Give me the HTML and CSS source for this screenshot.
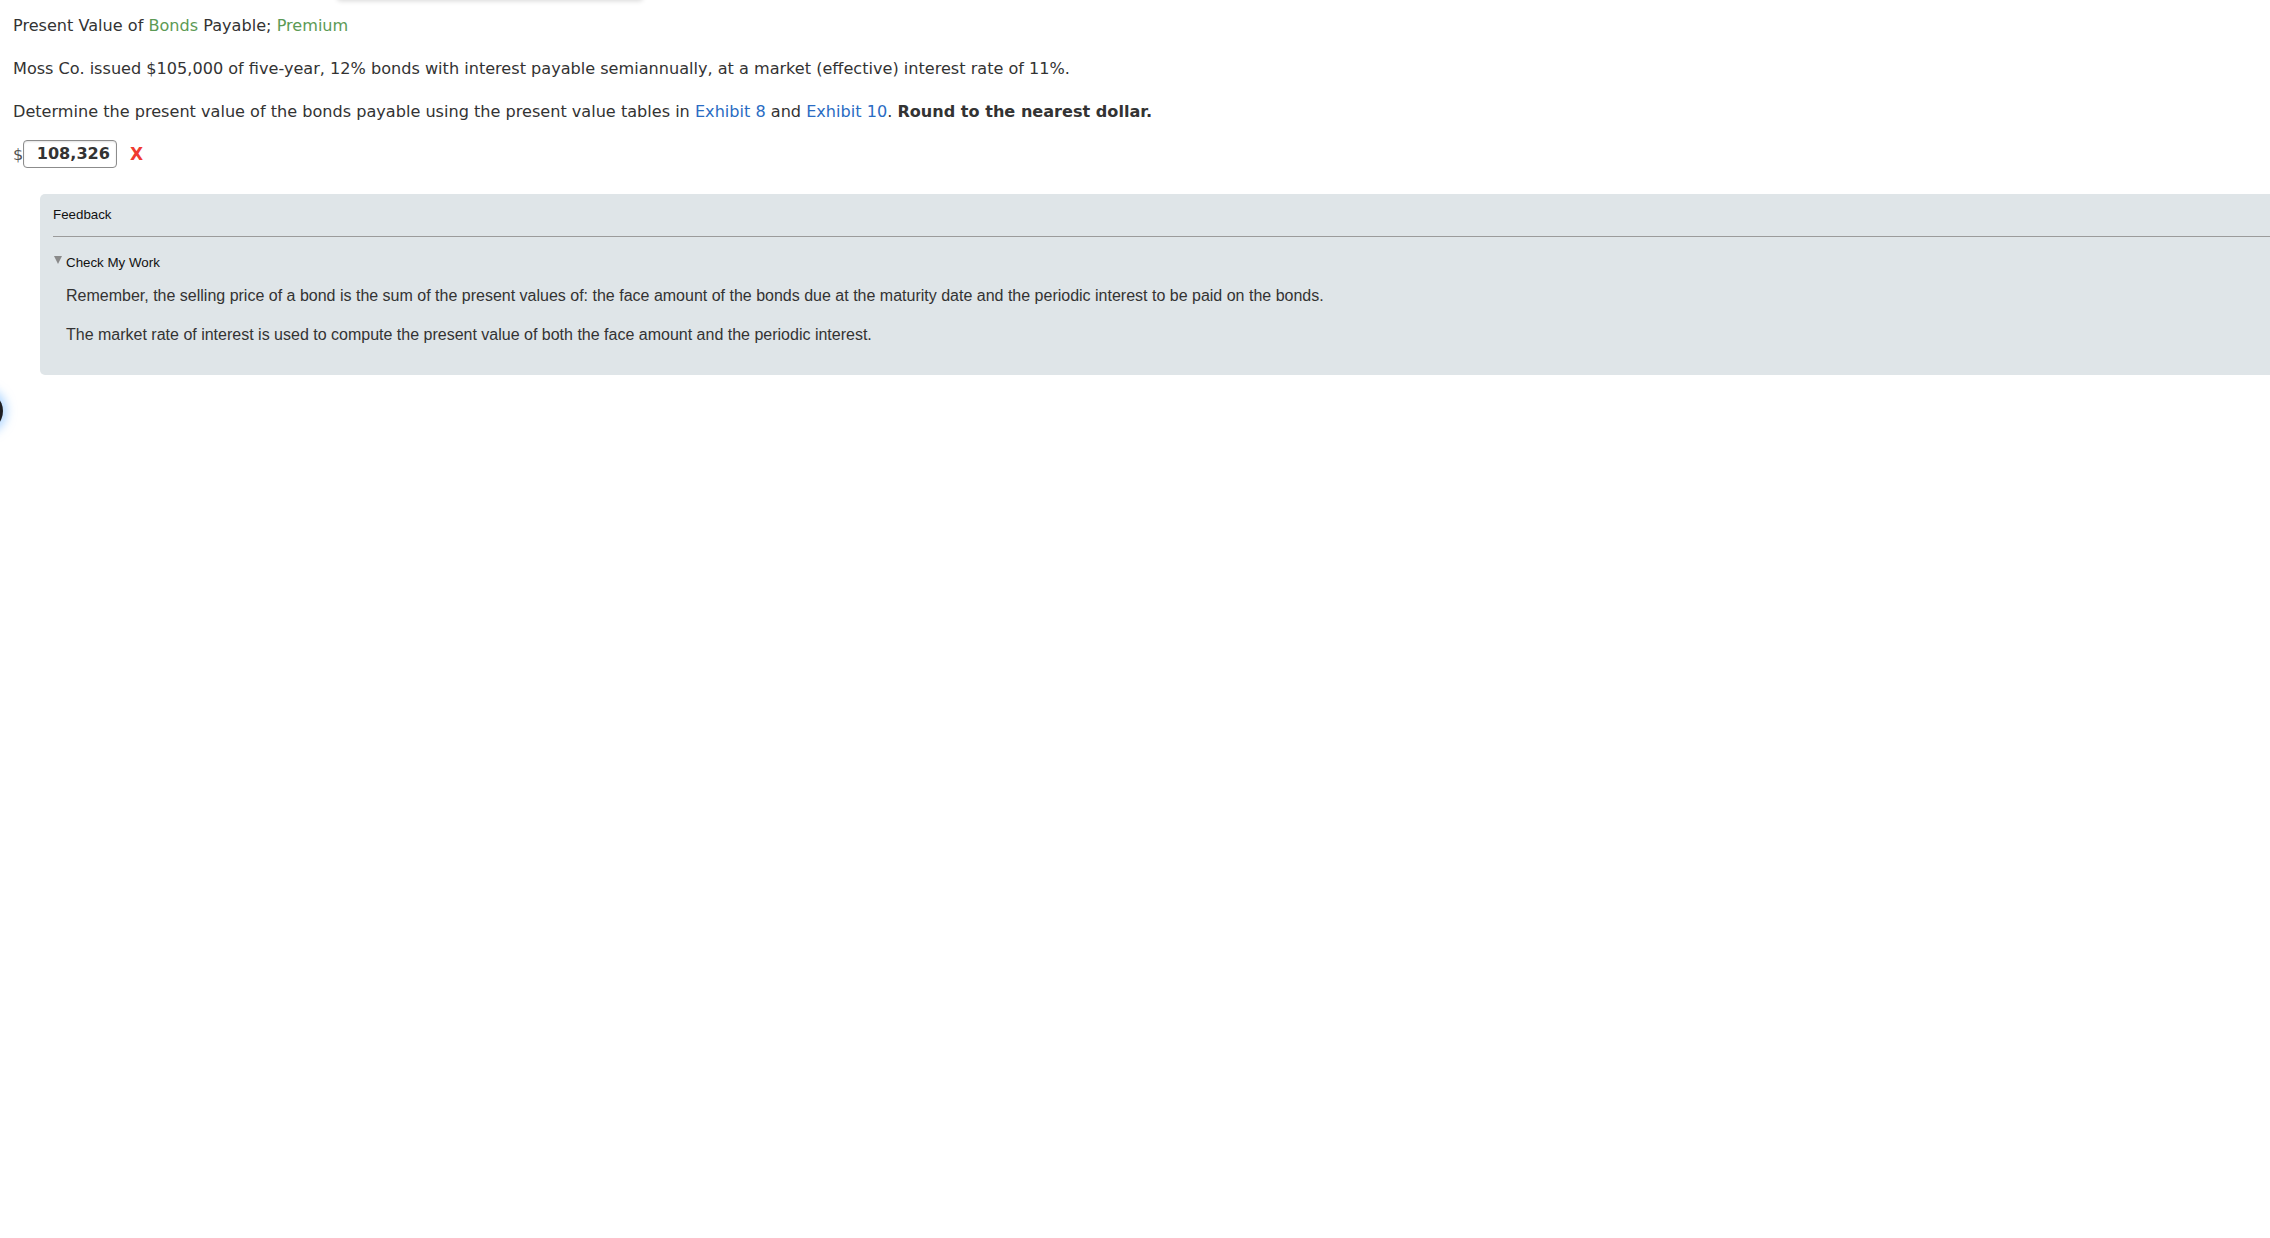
FILE: index.html
```html
<!DOCTYPE html>
<html lang="en">
<head>
<meta charset="utf-8">
<title>Present Value of Bonds Payable; Premium</title>
<link rel="stylesheet" href="styles.css">
</head>
<body>
<div class="top-shadow"></div>
<div class="side-dot"></div>
<main class="question">
  <p class="title">Present Value of <span class="term">Bonds</span> Payable; <span class="term">Premium</span></p>
  <p>Moss Co. issued $105,000 of five-year, 12% bonds with interest payable semiannually, at a market (effective) interest rate of 11%.</p>
  <p class="last">Determine the present value of the bonds payable using the present value tables in <a class="link" href="#">Exhibit 8</a> and <a class="link" href="#">Exhibit 10</a>. <strong>Round to the nearest dollar.</strong></p>
  <div class="answer-row">
    <span class="currency">$</span>
    <span class="answer-box">108,326</span>
    <span class="wrong">X</span>
  </div>
  <section class="feedback">
    <div class="feedback-head">Feedback</div>
    <div class="check-head"><span class="tri"></span>Check My Work</div>
    <div class="feedback-body">
      <p>Remember, the selling price of a bond is the sum of the present values of: the face amount of the bonds due at the maturity date and the periodic interest to be paid on the bonds.</p>
      <p>The market rate of interest is used to compute the present value of both the face amount and the periodic interest.</p>
    </div>
  </section>
</main>
</body>
</html>
```
FILE: styles.css
```css
html, body {
  margin: 0;
  padding: 0;
  background: #ffffff;
  overflow: hidden;
}
body {
  font-family: "DejaVu Sans", Verdana, sans-serif;
  font-size: 16.1px;
  color: #333333;
}
.top-shadow {
  position: absolute;
  top: -40px;
  left: 337px;
  width: 306px;
  height: 40px;
  background: #ffffff;
  border-radius: 4px;
  box-shadow: 0 1px 5px rgba(0, 0, 0, 0.16);
}
.side-dot {
  position: absolute;
  left: -37px;
  top: 391px;
  width: 40px;
  height: 40px;
  border-radius: 50%;
  background: #1e1e22;
  box-shadow: 0 0 10px 4px rgba(120, 185, 255, 0.55);
}
.question {
  padding: 16px 0 0 13px;
}
.question p {
  margin: 0 0 23px;
  line-height: 20px;
}
.question p.last {
  margin-bottom: 18px;
}
.term {
  color: #5c9a55;
}
.link {
  color: #2a6cc3;
  text-decoration: none;
}
strong {
  font-weight: bold;
}
.answer-row {
  display: flex;
  align-items: center;
  height: 28px;
}
.currency {
  color: #555555;
  width: 10px;
}
.answer-box {
  box-sizing: border-box;
  width: 94px;
  height: 28px;
  border: 1px solid #8c8c8c;
  border-radius: 4px;
  box-shadow: inset 0 1px 2px rgba(0, 0, 0, 0.12);
  font-weight: bold;
  text-align: right;
  padding-right: 6px;
  line-height: 26px;
  color: #333333;
}
.wrong {
  margin-left: 13px;
  color: #ef3b2f;
  font-weight: bold;
  font-size: 17px;
}
.feedback {
  margin: 26px -20px 0 27px;
  background: #dfe5e8;
  border-radius: 5px;
  padding: 13px 0 31px 13px;
  font-family: "Liberation Sans", Arial, Helvetica, sans-serif;
  color: #111111;
}
.feedback-head {
  font-size: 13.33px;
  line-height: 15px;
  padding-bottom: 14px;
  border-bottom: 1px solid #9b9b9b;
}
.check-head {
  margin-top: 18px;
  font-size: 13.33px;
  line-height: 15px;
  display: flex;
  align-items: center;
}
.tri {
  width: 0;
  height: 0;
  border-left: 4.5px solid transparent;
  border-right: 4.5px solid transparent;
  border-top: 8px solid #8a8a8a;
  margin: -5px 4px 0 1px;
}
.feedback-body {
  padding-left: 13px;
  margin-top: 17px;
  color: #333333;
}
.feedback-body p {
  font-size: 16px;
  line-height: 18px;
  margin: 0 0 21px;
}
.feedback-body p:last-child {
  margin-bottom: 0;
}
```
